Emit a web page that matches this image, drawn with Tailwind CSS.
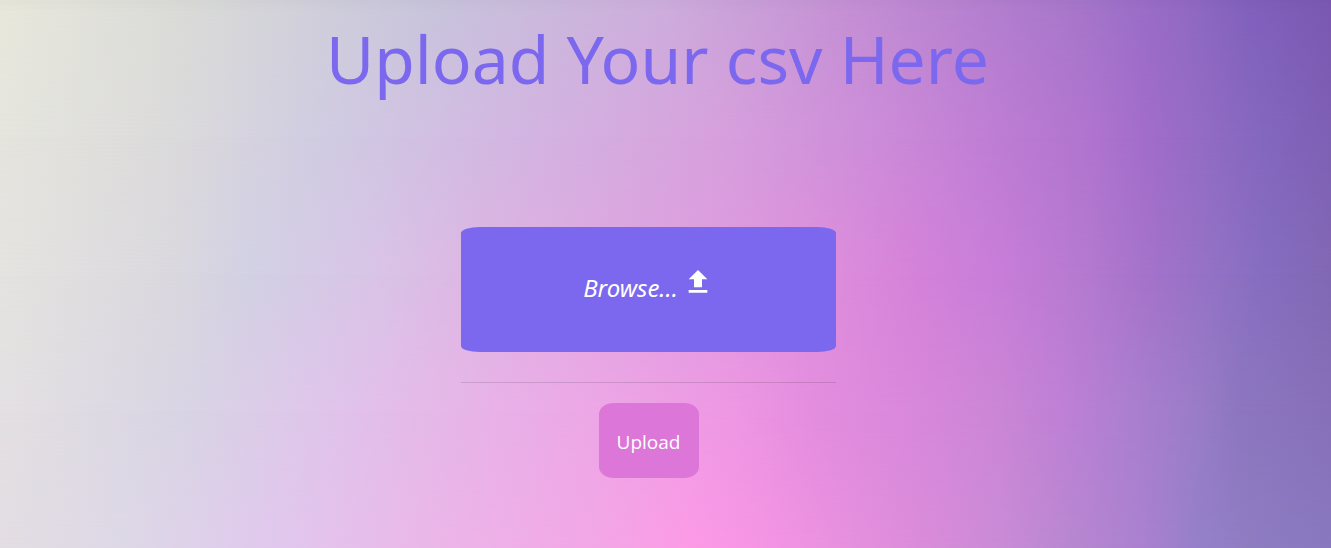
<!DOCTYPE html>
<html lang="en">
<head>
<meta charset="utf-8">
<meta name="viewport" content="width=device-width, initial-scale=1">
<title>Upload Your csv Here</title>
<script src="https://cdn.jsdelivr.net/npm/@tailwindcss/browser@4"></script>
</head>
<body class="relative isolate min-h-screen font-['Noto_Sans',sans-serif]">
<!-- Backdrop: horizontal gradients faded into each other from top to bottom -->
<div class="absolute inset-0 -z-10" aria-hidden="true">
  <div class="absolute inset-0 bg-[linear-gradient(90deg,#e8e8dc_0%,#dadbd8_14%,#c8c5dc_32%,#cdaddc_50%,#c48fd4_64%,#b27ecf_75%,#a676ca_81%,#9a6dc7_86%,#8e68c2_90%,#8060bc_94%,#7b58b2_100%)]"></div>
  <div class="absolute inset-0 bg-[linear-gradient(90deg,#e5e5de_0%,#dbdadb_13%,#d0cce2_24%,#d2b8e2_37%,#d7a0dd_54%,#ca88d8_68%,#be7dd4_75%,#b074cf_82%,#a26dca_86%,#946cc4_90%,#8367bf_95%,#7e60b4_100%)] mask-[linear-gradient(180deg,transparent_0%,#000_25%)]"></div>
  <div class="absolute inset-0 bg-[linear-gradient(90deg,#e5e3e0_0%,#dad8de_13%,#d2d0e4_19%,#d9c4e7_28%,#deb2e2_38%,#dea2e0_49%,#de8edc_62%,#d683d9_68%,#c87dd9_75%,#b67ad1_81%,#a272c9_87%,#9372c5_91%,#866dc0_95%,#8268b4_100%)] mask-[linear-gradient(180deg,transparent_25%,#000_50%)]"></div>
  <div class="absolute inset-0 bg-[linear-gradient(90deg,#e4e0e2_0%,#d8d4e4_14%,#dfc5eb_24%,#e6b6e8_34%,#eda6e6_45%,#ee97e3_55%,#e48ddf_61%,#d687da_70%,#cb86d5_75%,#be80d6_80%,#ab7fd0_85%,#9a7cc8_90%,#8d77c0_93%,#8770b9_100%)] mask-[linear-gradient(180deg,transparent_50%,#000_75%)]"></div>
  <div class="absolute inset-0 bg-[linear-gradient(90deg,#e2dde2_0%,#ddd7e7_10%,#e0c8ed_20%,#ecb4e8_34%,#f3a6e6_45%,#fd9ae6_52%,#f394e3_58%,#da8cda_69%,#ca8bd6_75%,#b987d1_80%,#a981cf_86%,#9580ca_90%,#8e7cc0_94%,#8878c0_100%)] mask-[linear-gradient(180deg,transparent_75%,#000_100%)]"></div>
  <div class="absolute inset-x-0 top-0 h-3 bg-linear-to-b from-black/2 to-transparent"></div>
</div>
<main class="flex flex-col items-center pt-3 pr-4 pb-16">
  <h1 class="text-center text-[66px] leading-[92px] text-[#7b68ee]">Upload Your csv Here</h1>
  <form class="mt-[123px] mr-[18px] flex w-full max-w-[375px] flex-col items-center">
    <input id="csv" type="file" accept=".csv" class="peer sr-only">
    <label for="csv" class="flex h-[125px] w-full cursor-pointer items-center justify-center gap-1 rounded-[5%] bg-[#7b68ee] pb-1 text-2xl text-white italic">
      <span>Browse...</span>
      <svg class="mb-3 size-8" viewBox="0 0 24 24" fill="currentColor" aria-hidden="true"><path d="M5 20h14v-2H5v2zm0-10h4v6h6v-6h4l-7-7-7 7z"/></svg>
    </label>
    <hr class="mt-[30px] mb-5 w-full border-black/12">
    <button type="submit" class="h-[75px] w-[100px] rounded-[15%] bg-[#dc76d9] pt-1 font-['Open_Sans',sans-serif] text-[19px] text-white">Upload</button>
  </form>
</main>
</body>
</html>
